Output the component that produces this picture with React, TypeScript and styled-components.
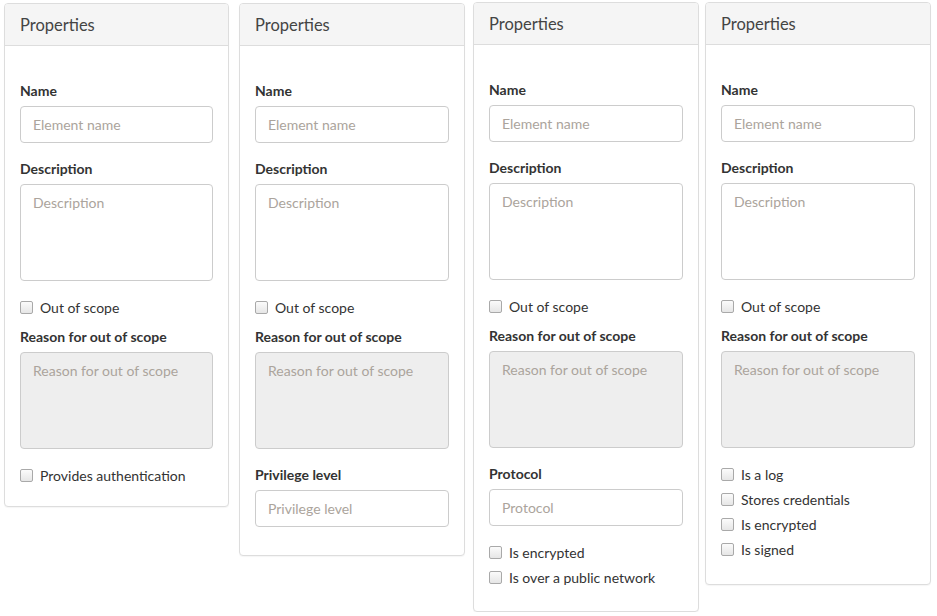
import React from "react";
import styled, { createGlobalStyle } from "styled-components";

const GlobalStyle = createGlobalStyle`
  html, body {
    margin: 0;
    padding: 0;
    background: #ffffff;
  }
  body {
    font-family: Lato, "Open Sans", Arial, sans-serif;
    color: #333333;
  }
  * {
    box-sizing: border-box;
  }
`;

type Field =
  | { kind: "input"; label: string; placeholder: string }
  | { kind: "textarea"; label: string; placeholder: string; disabled?: boolean }
  | { kind: "checks"; items: string[] };

type PanelSpec = {
  left: number;
  top: number;
  width: number;
  bottom: number;
  fields: Field[];
};

const common: Field[] = [
  { kind: "input", label: "Name", placeholder: "Element name" },
  { kind: "textarea", label: "Description", placeholder: "Description" },
  { kind: "checks", items: ["Out of scope"] },
  {
    kind: "textarea",
    label: "Reason for out of scope",
    placeholder: "Reason for out of scope",
    disabled: true,
  },
];

const panels: PanelSpec[] = [
  {
    left: 4,
    top: 3,
    width: 225,
    bottom: 21,
    fields: [...common, { kind: "checks", items: ["Provides authentication"] }],
  },
  {
    left: 10,
    top: 3,
    width: 226,
    bottom: 28,
    fields: [
      ...common,
      { kind: "input", label: "Privilege level", placeholder: "Privilege level" },
    ],
  },
  {
    left: 8,
    top: 2,
    width: 226,
    bottom: 24,
    fields: [
      ...common,
      { kind: "input", label: "Protocol", placeholder: "Protocol" },
      { kind: "checks", items: ["Is encrypted", "Is over a public network"] },
    ],
  },
  {
    left: 6,
    top: 2,
    width: 226,
    bottom: 25,
    fields: [
      ...common,
      {
        kind: "checks",
        items: ["Is a log", "Stores credentials", "Is encrypted", "Is signed"],
      },
    ],
  },
];

const Row = styled.div`
  display: flex;
  align-items: flex-start;
`;

const Panel = styled.div<{ $left: number; $top: number; $width: number }>`
  width: ${({ $width }) => $width}px;
  flex: none;
  margin-left: ${({ $left }) => $left}px;
  margin-top: ${({ $top }) => $top}px;
  border: 1px solid #dddddd;
  border-radius: 4px;
  background: #ffffff;
  box-shadow: 0 1px 1px rgba(0, 0, 0, 0.04);
`;

const Heading = styled.div`
  height: 42px;
  padding: 0 15px;
  display: flex;
  align-items: center;
  background: #f5f5f5;
  border-bottom: 1px solid #dddddd;
  border-radius: 3px 3px 0 0;
  font-size: 16.5px;
  color: #444444;
`;

const Body = styled.div<{ $bottom: number }>`
  padding: 35px 15px ${({ $bottom }) => $bottom}px;
`;

const Group = styled.div`
  margin-bottom: 16px;
  &:last-child {
    margin-bottom: 0;
  }
`;

const Label = styled.label`
  display: block;
  font-weight: 700;
  font-size: 14px;
  line-height: 20px;
  margin-bottom: 5px;
  color: #333333;
`;

const TextInput = styled.input`
  display: block;
  width: 100%;
  height: 37px;
  padding: 0 12px;
  border: 1px solid #cccccc;
  border-radius: 4px;
  font-family: inherit;
  font-size: 14px;
  color: #555555;
  background: #ffffff;
  &::placeholder {
    color: #aba49c;
  }
`;

const TextArea = styled.textarea`
  display: block;
  width: 100%;
  height: 97px;
  padding: 8px 12px;
  border: 1px solid #cccccc;
  border-radius: 4px;
  font-family: inherit;
  font-size: 14px;
  line-height: 20px;
  color: #555555;
  background: #ffffff;
  resize: none;
  &:disabled {
    background: #eeeeee;
  }
  &::placeholder {
    color: #aba49c;
  }
`;

const Checks = styled.div`
  display: flex;
  flex-direction: column;
  gap: 5px;
  margin-bottom: 10px;
  &:last-child {
    margin-bottom: 0;
  }
`;

const CheckLine = styled.label`
  display: flex;
  align-items: center;
  gap: 7px;
  height: 20px;
  font-size: 14px;
  color: #333333;
`;

const Box = styled.span`
  width: 13px;
  height: 13px;
  border: 1px solid #a9a9a9;
  border-radius: 2px;
  background: linear-gradient(#fbfbfb, #e6e6e6);
`;

const renderField = (f: Field, i: number) => {
  if (f.kind === "checks") {
    return (
      <Checks key={i}>
        {f.items.map((t) => (
          <CheckLine key={t}>
            <Box />
            {t}
          </CheckLine>
        ))}
      </Checks>
    );
  }
  return (
    <Group key={i}>
      <Label>{f.label}</Label>
      {f.kind === "input" ? (
        <TextInput placeholder={f.placeholder} />
      ) : (
        <TextArea placeholder={f.placeholder} disabled={f.disabled} />
      )}
    </Group>
  );
};

export default function App() {
  return (
    <>
      <GlobalStyle />
      <Row>
        {panels.map((p, i) => (
          <Panel key={i} $left={p.left} $top={p.top} $width={p.width}>
            <Heading>Properties</Heading>
            <Body $bottom={p.bottom}>{p.fields.map(renderField)}</Body>
          </Panel>
        ))}
      </Row>
    </>
  );
}
